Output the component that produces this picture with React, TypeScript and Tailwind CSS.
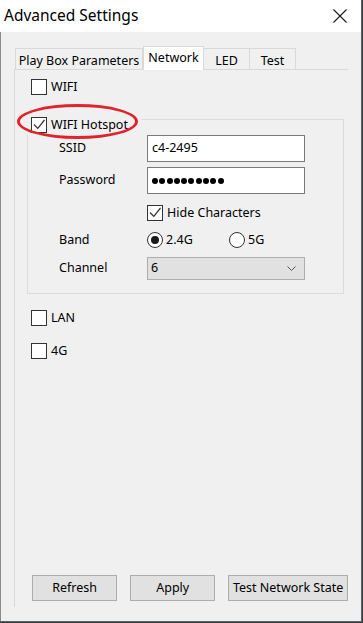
import { ReactNode } from "react";

function Box({ checked }: { checked?: boolean }) {
  return (
    <span className="w-4 h-4 border border-[#333333] bg-white flex shrink-0">
      {checked && (
        <svg viewBox="0 0 14 14" className="w-[14px] h-[14px]">
          <path d="M2 6.5 L5.8 10.3 L12.5 2" fill="none" stroke="#333333" strokeWidth="1.2" />
        </svg>
      )}
    </span>
  );
}

function Radio({ checked }: { checked?: boolean }) {
  return (
    <span className="w-4 h-4 rounded-full border border-[#333333] bg-white flex items-center justify-center shrink-0">
      {checked && <span className="w-2 h-2 rounded-full bg-[#1a1a1a]" />}
    </span>
  );
}

function CheckRow({ label, checked }: { label: string; checked?: boolean }) {
  return (
    <div className="flex items-center gap-[4px] h-4">
      <Box checked={checked} />
      <span className="text-[12.5px] leading-none text-black">{label}</span>
    </div>
  );
}

function Field({ label, children }: { label: string; children: ReactNode }) {
  return (
    <div className="flex items-center">
      <span className="w-[88px] text-[12.5px] text-black">{label}</span>
      {children}
    </div>
  );
}

const TABS = [
  { label: "Play Box Parameters", w: "w-[128px]" },
  { label: "Network", w: "w-[61px]", active: true },
  { label: "LED", w: "w-[46px]" },
  { label: "Test", w: "w-[46px]" },
];

export default function App() {
  return (
    <div className="w-[363px] h-[623px] bg-[#3b3f45] font-['Segoe_UI','Noto_Sans',sans-serif] overflow-hidden">
      <div className="relative w-[362px] h-[622px] bg-[#f0f0f0] border-r border-b border-[#5e5e5e] flex flex-col">
        {/* Title bar */}
        <div className="h-8 bg-white flex items-center justify-between pl-1 pr-[14px] shrink-0">
          <span className="text-[15.5px] text-black">Advanced Settings</span>
          <svg viewBox="0 0 14 14" className="w-[14px] h-[14px]">
            <path d="M0.5 0.5 L13.5 13.5 M13.5 0.5 L0.5 13.5" stroke="#1a1a1a" strokeWidth="1.1" />
          </svg>
        </div>

        <div className="flex-1 flex flex-col border-l border-[#8a8a8a] pt-[14px] pl-[13px]">
          {/* Tabs */}
          <div className="flex items-end h-[23px] pl-px relative z-10">
            {TABS.map((t) =>
              t.active ? (
                <div
                  key={t.label}
                  className={`${t.w} h-[24px] -mb-px bg-white border border-b-0 border-[#d9d9d9] flex items-start justify-center pt-[2px] text-[12.5px] text-black`}
                >
                  {t.label}
                </div>
              ) : (
                <div
                  key={t.label}
                  className={`${t.w} h-[21px] border border-b-0 border-l-0 first:border-l border-[#d9d9d9] flex items-start justify-center pt-[3px] text-[12.5px] text-black`}
                >
                  {t.label}
                </div>
              )
            )}
          </div>

          {/* Pane */}
          <div className="w-[334px] flex-1 mb-[14px] border-t border-l border-[#d9d9d9] flex flex-col pt-[9px]">
            <div className="pl-4">
              <CheckRow label="WIFI" />
            </div>

            <div className="mt-[24px] ml-[12px] w-[317px] border border-[#dcdcdc] pb-[13px]">
              <div className="-mt-[3px] -ml-px w-[114px] h-[18px] bg-[#f0f0f0] pl-[4px]">
                <CheckRow label="WIFI Hotspot" checked />
              </div>
              <div className="pl-[31px] flex flex-col">
                <Field label="SSID">
                  <div className="w-[158px] h-[27px] bg-white border border-[#7a7a7a] flex items-center pl-[4px] text-[12.5px] text-black">
                    c4-2495
                  </div>
                </Field>
                <div className="mt-[5px]">
                  <Field label="Password">
                    <div className="w-[158px] h-[27px] bg-white border border-[#7a7a7a] flex items-center pl-[4px] gap-[1.3px]">
                      {Array.from({ length: 10 }).map((_, i) => (
                        <span key={i} className="w-[6px] h-[6px] rounded-full bg-black" />
                      ))}
                    </div>
                  </Field>
                </div>
                <div className="mt-[11px] pl-[88px]">
                  <CheckRow label="Hide Characters" checked />
                </div>
                <div className="mt-[10px]">
                  <Field label="Band">
                    <div className="flex items-center">
                      <div className="w-[82px] flex items-center gap-[3px]">
                        <Radio checked />
                        <span className="text-[12.5px] text-black">2.4G</span>
                      </div>
                      <div className="flex items-center gap-[3px]">
                        <Radio />
                        <span className="text-[12.5px] text-black">5G</span>
                      </div>
                    </div>
                  </Field>
                </div>
                <div className="mt-[7px]">
                  <Field label="Channel">
                    <div className="w-[158px] h-[23px] bg-[#e1e1e1] border border-[#adadad] flex items-center justify-between pl-[3px] pr-[8px] text-[12.5px] text-black">
                      <span>6</span>
                      <svg viewBox="0 0 9 5" className="w-[9px] h-[5px]">
                        <path d="M0.5 0.5 L4.5 4.5 L8.5 0.5" fill="none" stroke="#555555" strokeWidth="1" />
                      </svg>
                    </div>
                  </Field>
                </div>
              </div>
            </div>

            <div className="pl-4 mt-[16px] flex flex-col gap-[17px]">
              <CheckRow label="LAN" />
              <CheckRow label="4G" />
            </div>

            <div className="mt-auto mb-[6px] pl-[17px] flex gap-[13px]">
              {["Refresh", "Apply", "Test Network State"].map((b, i) => (
                <button
                  key={b}
                  className={`${i === 2 ? "w-[121px]" : "w-[86px]"} h-[26px] bg-[#e1e1e1] border border-[#adadad] text-[12.5px] text-black`}
                >
                  {b}
                </button>
              ))}
            </div>
          </div>
        </div>

        {/* Annotation */}
        <div className="absolute left-[17px] top-[104px] w-[121px] h-[35px] rounded-[50%] border-[3px] border-[#e0242c]" />
      </div>
    </div>
  );
}
